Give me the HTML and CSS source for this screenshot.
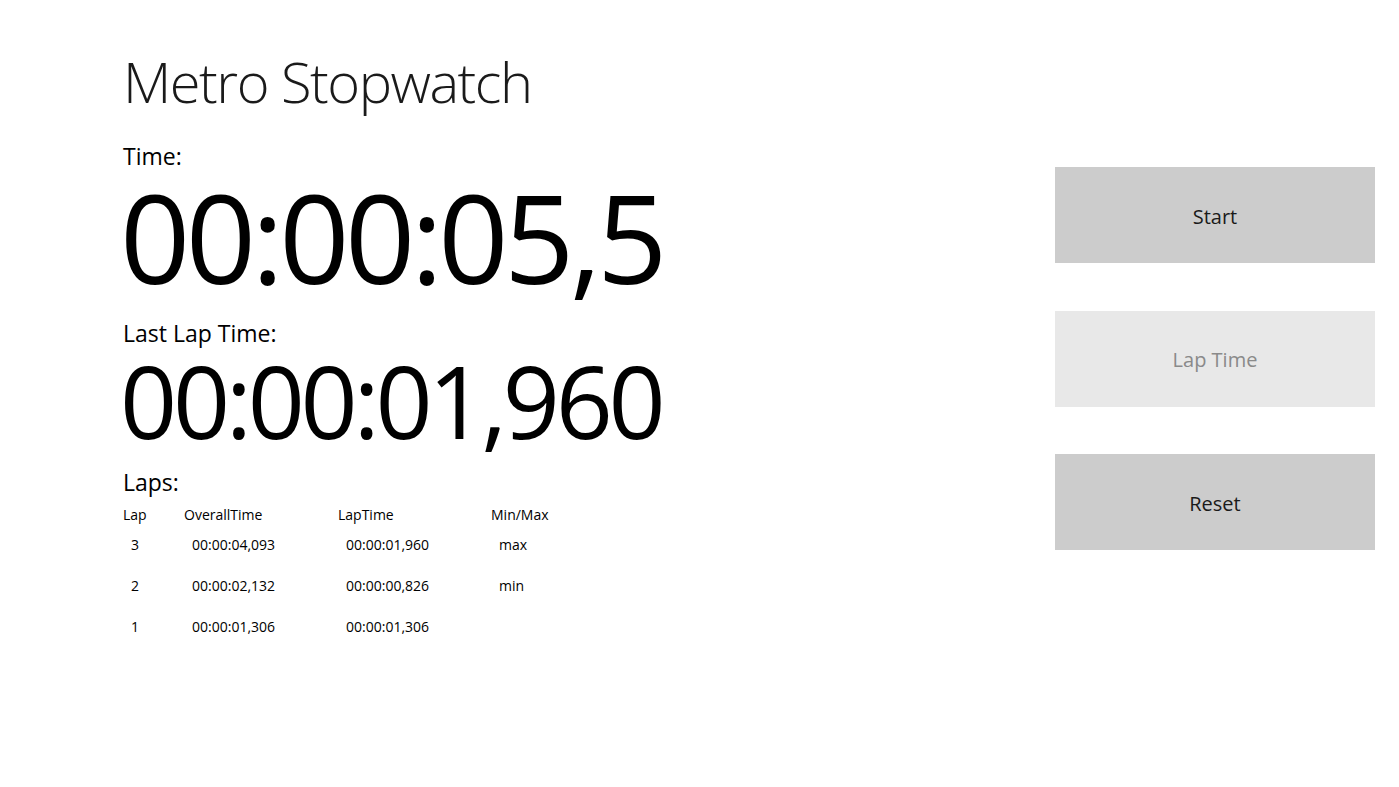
FILE: index.html
```html
<!DOCTYPE html>
<html lang="en">
<head>
<meta charset="utf-8">
<title>Metro Stopwatch</title>
<link rel="stylesheet" href="styles.css">
</head>
<body>
<div class="page">
  <main class="main">
    <h1 class="title">Metro Stopwatch</h1>
    <div class="label">Time:</div>
    <div class="big-time">00:00:05,5</div>
    <div class="label label-lap">Last Lap Time:</div>
    <div class="lap-time">00:00:01,960</div>
    <div class="label label-laps">Laps:</div>
    <div class="laps">
      <div class="row head">
        <span>Lap</span><span>OverallTime</span><span>LapTime</span><span>Min/Max</span>
      </div>
      <div class="row">
        <span>3</span><span>00:00:04,093</span><span>00:00:01,960</span><span>max</span>
      </div>
      <div class="row">
        <span>2</span><span>00:00:02,132</span><span>00:00:00,826</span><span>min</span>
      </div>
      <div class="row">
        <span>1</span><span>00:00:01,306</span><span>00:00:01,306</span><span></span>
      </div>
    </div>
  </main>
  <aside class="controls">
    <button class="btn">Start</button>
    <button class="btn btn-disabled">Lap Time</button>
    <button class="btn">Reset</button>
  </aside>
</div>
</body>
</html>
```
FILE: styles.css
```css
html, body {
  margin: 0;
  padding: 0;
  background: #ffffff;
}
body {
  font-family: "Open Sans", "Noto Sans", sans-serif;
  color: #000;
}
.page {
  display: flex;
  width: 1399px;
  height: 787px;
}
.main {
  flex: 1;
  padding-left: 123px;
  padding-top: 53px;
}
.title {
  margin: 0;
  font-size: 56px;
  font-weight: 300;
  line-height: 56px;
  letter-spacing: -1.5px;
  color: #1a1a1a;
}
.label {
  font-size: 23px;
  line-height: 28px;
  margin-top: 33px;
}
.big-time {
  font-size: 123px;
  line-height: 123px;
  letter-spacing: -4.6px;
  margin-top: 5px;
  margin-left: -3px;
}
.label-lap {
  margin-top: 21px;
}
.lap-time {
  font-size: 100px;
  line-height: 100px;
  letter-spacing: -4.3px;
  margin-top: 3px;
  margin-left: -3px;
}
.label-laps {
  margin-top: 18px;
}
.laps {
  font-size: 14px;
  padding-top: 4px;
}
.row {
  display: grid;
  grid-template-columns: 61px 154px 153px 100px;
  height: 41px;
  line-height: 20px;
}
.row.head {
  height: 30px;
  margin-top: 5px;
}
.row span {
  padding-left: 8px;
}
.row.head span {
  padding-left: 0;
}
.controls {
  width: 320px;
  margin-right: 24px;
  padding-top: 167px;
  display: flex;
  flex-direction: column;
  gap: 47.5px;
}
.btn {
  height: 96px;
  border: none;
  background: #cccccc;
  font-family: "Open Sans", "Noto Sans", sans-serif;
  font-size: 20px;
  color: #1a1a1a;
  padding: 0;
  padding-top: 2px;
}
.btn-disabled {
  background: #e8e8e8;
  color: #8a8a8a;
}
```
